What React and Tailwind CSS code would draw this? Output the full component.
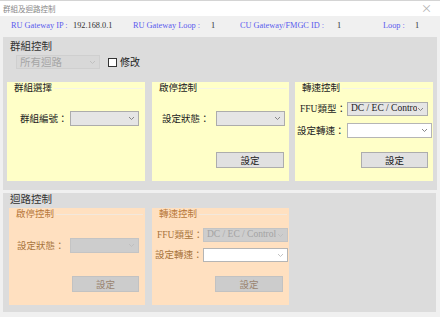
const cjk = { fontFamily: '"Noto Sans CJK TC", "Noto Sans", sans-serif' };
const serif = { fontFamily: '"Liberation Serif", "Noto Sans CJK TC", serif' };

const Chevron = ({ color = "#6b6b6b" }) => (
  <svg width="7" height="5" viewBox="0 0 7 5" className="shrink-0">
    <path d="M1 1 L3.5 3.5 L6 1" fill="none" stroke={color} strokeWidth="0.9" />
  </svg>
);

const Select = ({ w, h = 15, value, tone = "gray", disabled, ml }) => {
  const styles = {
    gray: "bg-[#e5e5e5] border-[#acacac] text-[#222]",
    white: "bg-white border-[#b5b5b5] text-[#222]",
    off: "bg-[#cdcdcd] border-[#c4c4c4] text-[#a3a3a3]",
  };
  return (
    <div
      className={`flex items-center justify-between border px-[3px] ${styles[tone]}`}
      style={{ width: w, height: h, marginLeft: ml }}
    >
      <span className="text-[9.5px] leading-none whitespace-nowrap overflow-hidden" style={serif}>
        {value}
      </span>
      <Chevron color={disabled ? "#bdbdbd" : "#7a7a7a"} />
    </div>
  );
};

const Button = ({ w, ml, disabled }) => (
  <div
    className={`flex items-center justify-center border h-[16px] text-[9.5px] ${
      disabled
        ? "bg-[#cccccc] border-[#c2c2c2] text-[#9a8470]"
        : "bg-[#e1e1e1] border-[#adadad] text-[#222]"
    }`}
    style={{ width: w, marginLeft: ml, ...cjk }}
  >
    設定
  </div>
);

const Box = ({ title, w, h, ml, warm, children }) => (
  <div
    className={`flex flex-col shrink-0 ${warm ? "bg-[#ffe0c0]" : "bg-[#ffffc8]"}`}
    style={{ width: w, height: h, marginLeft: ml }}
  >
    <div className="flex items-center h-[11px]">
      <span
        className={`pl-[7px] pr-[2px] text-[9.5px] leading-none whitespace-nowrap ${
          warm ? "text-[#b8793c]" : "text-[#222]"
        }`}
        style={cjk}
      >
        {title}
      </span>
      <div className={`flex-1 h-px mr-[2px] mt-[2px] ${warm ? "bg-[#f3e8dc]" : "bg-[#f4f4e6]"}`} />
    </div>
    {children}
  </div>
);

const Label = ({ children, w, pl, warm }) => (
  <span
    className={`text-[9.5px] leading-none whitespace-nowrap ${warm ? "text-[#a8743c]" : "text-[#222]"}`}
    style={{ width: w, paddingLeft: pl, ...cjk }}
  >
    {children}
  </span>
);

export default function App() {
  return (
    <div className="w-[440px] h-[317px] bg-[#f0f0f0] overflow-hidden border-t border-[#d4d4d4] flex flex-col">
      <div className="h-[15px] bg-white flex items-center justify-between px-[3px]">
        <span className="text-[7.5px] text-[#8a8a8a] leading-none" style={cjk}>
          群組及迴路控制
        </span>
        <span className="text-[11px] text-[#b0b0b0] leading-none mr-[5px]" style={cjk}>
          ×
        </span>
      </div>

      <div className="h-[21px] flex items-center text-[8.3px] leading-none" style={serif}>
        <span className="ml-[11px] w-[62px] text-[#5a5aee]">RU Gateway IP :</span>
        <span className="w-[60px] text-[#333]">192.168.0.1</span>
        <span className="w-[78px] text-[#5a5aee]">RU Gateway Loop :</span>
        <span className="w-[29px] text-[#333]">1</span>
        <span className="w-[97px] text-[#5a5aee]">CU Gateway/FMGC ID :</span>
        <span className="w-[46px] text-[#333]">1</span>
        <span className="w-[32px] text-[#5a5aee]">Loop :</span>
        <span className="text-[#333]">1</span>
      </div>

      {/* 群組控制 */}
      <div className="ml-[3px] w-[434px] h-[153px] bg-[#dcdcdc] flex flex-col">
        <div className="h-[14px] flex items-end pl-[7px]">
          <span className="text-[10.5px] leading-none text-[#333]" style={cjk}>
            群組控制
          </span>
        </div>
        <div className="flex items-center mt-[4px] h-[14px]">
          <div className="ml-[13px] w-[84px] h-[14px] bg-[#d8d8d8] border border-[#cfcfcf] flex items-center justify-between px-[3px]">
            <span className="text-[10.5px] leading-none text-[#a6a6a6]" style={cjk}>
              所有迴路
            </span>
            <Chevron color="#bdbdbd" />
          </div>
          <div className="ml-[8px] w-[9px] h-[9px] bg-white border border-[#333]" />
          <span className="ml-[3px] text-[10px] leading-none text-[#222]" style={cjk}>
            修改
          </span>
        </div>

        <div className="flex mt-[13px]">
          <Box title="群組選擇" w={138} h={99} ml={4}>
            <div className="flex items-center h-[15px] mt-[18px]">
              <Label w={63} pl={13}>群組編號：</Label>
              <Select w={69} />
            </div>
          </Box>
          <Box title="啟停控制" w={137} h={99} ml={7}>
            <div className="flex items-center h-[15px] mt-[18px]">
              <Label w={64} pl={10}>設定狀態：</Label>
              <Select w={69} />
            </div>
            <div className="flex mt-[26px]">
              <Button w={68} ml={64} />
            </div>
          </Box>
          <Box title="轉速控制" w={138} h={99} ml={6}>
            <div className="flex items-center h-[14px] mt-[9px]">
              <Label w={52} pl={5}>
                <span style={serif}>FFU</span>類型：
              </Label>
              <Select w={81} h={14} value="DC / EC / Contro" />
            </div>
            <div className="flex items-center h-[15px] mt-[7px]">
              <Label w={52} pl={2}>設定轉速：</Label>
              <Select w={85} tone="white" />
            </div>
            <div className="flex mt-[14px]">
              <Button w={67} ml={66} />
            </div>
          </Box>
        </div>
      </div>

      {/* 迴路控制 */}
      <div className="ml-[3px] mt-[3px] w-[433px] h-[119px] bg-[#dcdcdc] flex flex-col">
        <div className="h-[11px] flex items-end pl-[7px]">
          <span className="text-[10.5px] leading-none text-[#333]" style={cjk}>
            迴路控制
          </span>
        </div>
        <div className="flex mt-[4px]">
          <Box title="啟停控制" w={136} h={97} ml={6} warm>
            <div className="flex items-center h-[15px] mt-[19px]">
              <Label w={61} pl={8} warm>設定狀態：</Label>
              <Select w={69} tone="off" disabled />
            </div>
            <div className="flex mt-[23px]">
              <Button w={67} ml={63} disabled />
            </div>
          </Box>
          <Box title="轉速控制" w={137} h={97} ml={7} warm>
            <div className="flex items-center h-[14px] mt-[9px]">
              <Label w={51} pl={5} warm>
                <span style={serif}>FFU</span>類型：
              </Label>
              <Select w={85} h={14} tone="off" value="DC / EC / Control" disabled />
            </div>
            <div className="flex items-center h-[14px] mt-[6px]">
              <Label w={51} pl={3} warm>設定轉速：</Label>
              <Select w={85} h={14} tone="white" disabled />
            </div>
            <div className="flex mt-[14px]">
              <Button w={68} ml={63} disabled />
            </div>
          </Box>
        </div>
      </div>
    </div>
  );
}
